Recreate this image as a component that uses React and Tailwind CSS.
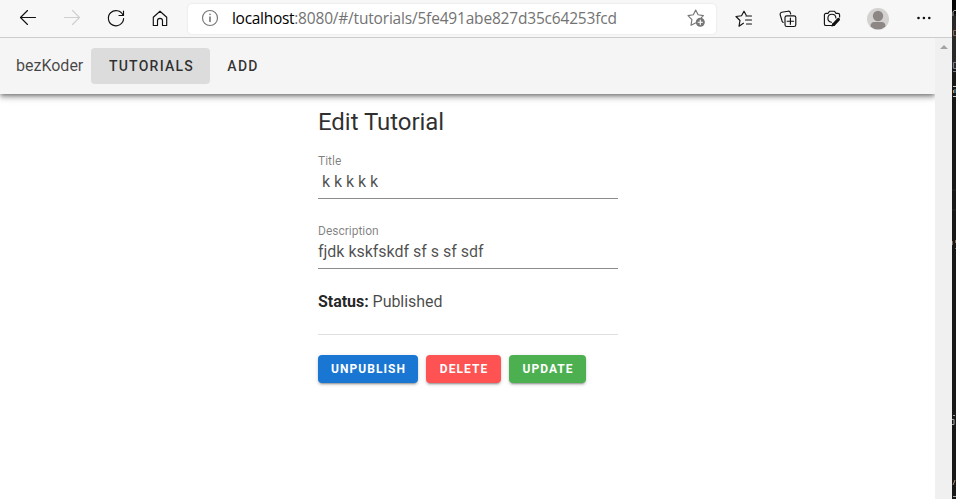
import React from "react";

const line = { fill: "none", stroke: "currentColor", strokeWidth: 1.15, strokeLinecap: "round", strokeLinejoin: "round" };

function Icon({ children, className = "" }) {
  return (
    <svg viewBox="0 0 20 20" className={`h-5 w-5 shrink-0 ${className}`} {...line}>
      {children}
    </svg>
  );
}

function Toolbar() {
  return (
    <div className="flex h-[38px] shrink-0 items-center border-b border-[#cccccc] bg-[#f7f7f7] text-[#111]">
      <Icon className="ml-[18px]">
        <path d="M17.5 8.5H2.500M9.500 1.500l-7 7 7 7" />
      </Icon>
      <Icon className="ml-6 text-[#cfcfcf]">
        <path d="M2.500 8.500h15M10.500 1.500l7 7-7 7" />
      </Icon>
      <Icon className="ml-6">
        <path d="M17 6.2A7.6 7.6 0 1 0 17.6 9.5M17.5 2v4.5H13" />
      </Icon>
      <Icon className="ml-6">
        <path d="M3.3 8.3 10 2.2l6.700 6.100V16.500h-4.200v-4.700a2.500 2.500 0 0 0-5 0v4.700H3.300z" />
      </Icon>
      <div className="ml-[18px] flex h-[30px] w-[528px] items-center rounded bg-white pb-px shadow-[0_0_2px_rgba(0,0,0,0.12)]">
        <Icon className="ml-3 text-[#767676]">
          <circle cx="10" cy="10" r="7.5" />
          <path d="M10 9v4.500M10 6.300v.2" strokeWidth="1.600" />
        </Icon>
        <div className="ml-3 w-[420px] whitespace-nowrap font-['Open_Sans','Noto_Sans',sans-serif] text-[15.5px] leading-5 tracking-[-0.19px] text-[#737373]">
          <span className="tracking-[-0.3px] text-black">localhost</span>:8080/#/tutorials/5fe491abe827d35c64253fcd
        </div>
        <Icon className="ml-[34px] text-[#767676]">
          <path d="M9.500 15 5 17.300l.9-5.700-3.900-4 5.300-.8L9.700 2l2.400 4.800 5.300.8-2 2" />
          <circle cx="14.300" cy="14.200" r="4.500" fill="currentColor" stroke="none" />
          <path d="M14.300 12v4.400M12.100 14.200h4.400" stroke="white" />
        </Icon>
      </div>
      <Icon className="ml-[18px]">
        <path d="M9.400 14.200 5 17.200l1-5.700-4-4 5.500-.8L10 2.200l2.100 3.800M12 7h5.500M11.500 11h6M12.500 15h5" />
      </Icon>
      <Icon className="ml-6">
        <path d="M5.200 13.500A3 3 0 0 1 3.800 11L2.200 5.800a2 2 0 0 1 1.500-2.500L10 2.200a2 2 0 0 1 2.300 1.500l.4 1.300" />
        <rect x="7" y="6.800" width="10.800" height="10.700" rx="1.800" />
        <path d="M12.400 9v6.300M9.200 12.200h6.400" />
      </Icon>
      <Icon className="ml-6">
        <path d="M10 16.500H4a1.600 1.600 0 0 1-1.600-1.600V6A1.600 1.600 0 0 1 4 4.400h2l1.500-2.200h5L14 4.400h2A1.600 1.600 0 0 1 17.600 6v2M9.500 13.200A4 4 0 1 1 13.900 9" />
        <path d="m11.800 15.400 4.700-5" strokeWidth="3" />
        <path d="m10 17 1-2.500 1.500 1.500z" fill="currentColor" />
      </Icon>
      <svg viewBox="0 0 22 22" className="ml-[25px] h-[22px] w-[22px] shrink-0">
        <circle cx="11" cy="11" r="11" fill="#d4d2d0" />
        <circle cx="11" cy="8" r="5.200" fill="#8c8785" />
        <path d="M3.500 18.500c0-3 1.200-4.500 4-4.500h7c2.800 0 4 1.500 4 4.500A11 11 0 0 1 11 21.300a11 11 0 0 1-7.500-2.800z" fill="#8c8785" />
      </svg>
      <svg viewBox="0 0 16 4" className="ml-[27px] mb-0.5 h-1 w-4 shrink-0" fill="#111">
        <circle cx="2.500" cy="2" r="1.300" />
        <circle cx="7.900" cy="2" r="1.300" />
        <circle cx="13.300" cy="2" r="1.300" />
      </svg>
    </div>
  );
}

function Field({ label, value }) {
  return (
    <div className="mb-[22px] h-12 border-b border-[#8c8c8c]">
      <div className="h-5 text-xs leading-5 text-black/50">{label}</div>
      <div className="whitespace-pre text-base leading-[22px] tracking-[-0.02px] text-black/[0.7]">{value}</div>
    </div>
  );
}

function Action({ className, children }) {
  return (
    <button className={`h-7 rounded pl-px text-xs font-bold tracking-[1.05px] text-white shadow-[0_3px_1px_-2px_rgba(0,0,0,0.2),0_2px_2px_rgba(0,0,0,0.14),0_1px_5px_rgba(0,0,0,0.12)] ${className}`}>
      {children}
    </button>
  );
}

function Page() {
  return (
    <div className="flex w-[935px] flex-col bg-white">
      <header className="flex h-14 shrink-0 items-center bg-[#f5f5f5] pl-4 shadow-[0_2px_4px_-1px_rgba(0,0,0,0.4),0_4px_5px_rgba(0,0,0,0.18),0_1px_10px_rgba(0,0,0,0.16)]">
        <div className="w-[75px] text-base text-black/[0.72]">bezKoder</div>
        <button className="h-9 w-[119px] rounded bg-[#dcdcdc] pl-0.5 text-sm font-medium tracking-[1.25px] text-black/80">TUTORIALS</button>
        <button className="h-9 w-[64px] rounded pl-0.5 text-sm font-medium tracking-[1.25px] text-black/80">ADD</button>
      </header>
      <main className="ml-[318px] w-[300px] pt-3">
        <h1 className="mb-[13px] h-8 text-2xl leading-8 tracking-[-0.05px] text-black/[0.82]">Edit Tutorial</h1>
        <Field label="Title" value=" k k k k k" />
        <Field label="Description" value="fjdk kskfskdf sf s sf sdf" />
        <p className="h-[44px] border-b border-[#dedede] text-base leading-[22px] tracking-[-0.04px] text-black/[0.72]">
          <strong className="text-black/[0.87]">Status:</strong> Published
        </p>
        <div className="flex gap-2 pt-5">
          <Action className="w-[100px] bg-[#1976d2]">UNPUBLISH</Action>
          <Action className="w-[75px] bg-[#ff5252]">DELETE</Action>
          <Action className="w-[77px] bg-[#4caf50]">UPDATE</Action>
        </div>
      </main>
    </div>
  );
}

/* Sliver of the editor window behind the browser's right edge. */
function EditorEdge() {
  return (
    <svg viewBox="0 0 4 499" className="h-[499px] w-1 shrink-0 bg-[#181818]" fill="none" stroke="#aaa">
      <path d="M0 0h4v14H0z" fill="#050505" stroke="none" />
      <path d="M0 16h4v52H0z" fill="#292929" stroke="none" />
      <path d="M4 10.500H2L1 12v4" />
      <path d="M4 30.500H1.500v5H4" stroke="#906b5d" />
      <path d="M4 62.500H1.500v6H4M1 71.500h3" stroke="#777b94" />
      <path d="M1 86.500h3M1 96.500h3" stroke="#ccc" />
      <path d="M1.500 90v3" stroke="#cf985b" />
      <path d="M3 89v4" stroke="#6098be" />
      <path d="M0 190h4M0 210h4" stroke="#292929" />
      <path d="M.5 241v4M3.500 240v3M3 248.500h1" stroke="#81665a" />
      <path d="M1 415.500h2M0 419.500h2v5H0" />
      <path d="m3 480-2 5" stroke="#b19175" />
      <path d="M1 496.500h3" />
    </svg>
  );
}

export default function App() {
  return (
    <div className="flex h-[499px] w-[956px] overflow-hidden bg-white font-[Roboto,'Liberation_Sans',sans-serif] text-black/[0.87]">
      <div className="flex w-[952px] shrink-0 flex-col">
        <Toolbar />
        <div className="flex flex-1 overflow-hidden">
          <Page />
          <div className="flex w-[17px] shrink-0 justify-center bg-[#f0f0f0] pt-[7px]">
            <svg viewBox="0 0 8 4" className="h-1 w-2" fill="#a3a3a3"><path d="M0 4 4 0l4 4z" /></svg>
          </div>
        </div>
      </div>
      <EditorEdge />
    </div>
  );
}
